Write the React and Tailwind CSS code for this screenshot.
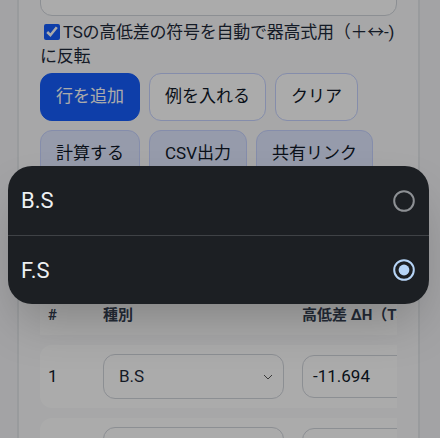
import React from 'react';

const font = { fontFamily: "Roboto, 'Noto Sans CJK JP', sans-serif" };

const Radio = ({ checked }) => (
    <svg width="24" height="24" viewBox="0 0 24 24">
        {checked ? (
            <>
                <circle cx="12" cy="12" r="9.8" fill="none" stroke="#b6d4f6" strokeWidth="2" />
                <circle cx="12" cy="12" r="5.4" fill="#b6d4f6" />
            </>
        ) : (
            <circle cx="12" cy="12" r="9.8" fill="none" stroke="#8d9094" strokeWidth="2" />
        )}
    </svg>
);

const Row = ({ no, kind, dh }) => (
    <div className="grid grid-cols-[55px_199px_220px_160px] items-center h-[63px] bg-white rounded-xl mt-[10px]">
        <div className="px-2 text-[17px] text-gray-900">{no}</div>
        <div className="px-2">
            <div className="w-[181px] h-[45px] rounded-xl border border-gray-300 bg-white flex items-center justify-between pl-[15px] pr-[10px] text-[17px] text-gray-800">
                <span>{kind}</span>
                <svg width="10" height="6" viewBox="0 0 10 6">
                    <path d="M1 1l4 4 4-4" fill="none" stroke="#555" strokeWidth="1" />
                </svg>
            </div>
        </div>
        <div className="px-2">
            <div className="w-[200px] h-[43px] rounded-xl border border-gray-300 bg-white flex items-center pl-[10px] text-[17px] text-gray-900">
                {dh}
            </div>
        </div>
        <div />
    </div>
);

const App = () => {
    const sheetOptions = [
        { label: "B.S", checked: false },
        { label: "F.S", checked: true }
    ];

    return (
        <div className="relative h-[438px] overflow-hidden bg-gray-100" style={font}>
            {/* ページ本体 */}
            <div className="ml-[17px] w-[403px] -mt-[54px] bg-gray-50 border-2 border-gray-200 px-[21px] pt-[18px] pb-10">
                <div className="h-[50px] rounded-xl border border-gray-300 bg-white flex items-center pl-[13px] text-[17px] text-gray-900">
                    100
                </div>

                <label className="block mt-[4px] text-[17px] leading-[24px] tracking-[-0.25px] text-gray-800">
                    <input type="checkbox" defaultChecked className="w-4 h-4 ml-1 mr-[3px] align-[-2px] accent-blue-600" />
                    TSの高低差の符号を自動で器高式用<span className="whitespace-nowrap">（＋↔-)</span>に反転
                </label>

                <div className="flex flex-wrap gap-[9px] mt-[5px]">
                    <button className="h-12 px-[15px] rounded-xl border border-blue-600 bg-blue-600 text-white text-[17px]">行を追加</button>
                    <button className="h-12 px-[15px] rounded-xl border border-indigo-200 bg-white text-gray-900 text-[17px]">例を入れる</button>
                    <button className="h-12 px-[15px] rounded-xl border border-indigo-200 bg-white text-gray-900 text-[17px]">クリア</button>
                    <button className="h-12 px-[15px] rounded-xl border border-indigo-200 bg-indigo-100 text-gray-900 text-[17px]">計算する</button>
                    <button className="h-12 px-[15px] rounded-xl border border-indigo-200 bg-indigo-100 text-gray-900 text-[17px]">CSV出力</button>
                    <button className="h-12 px-[15px] rounded-xl border border-indigo-200 bg-indigo-100 text-gray-900 text-[17px]">共有リンク</button>
                </div>

                {/* 表 */}
                <div className="mt-[113px] w-[357px] overflow-hidden">
                    <div className="w-[634px]">
                        <div className="grid grid-cols-[55px_199px_220px_160px] items-end h-[44px] pb-[9px] bg-white rounded-t-xl text-[15px] font-bold text-gray-700">
                            <div className="px-2">#</div>
                            <div className="px-2">種別</div>
                            <div className="px-2">高低差 ΔH（TS）</div>
                            <div className="px-2">備考</div>
                        </div>
                        <Row no="1" kind="B.S" dh="-11.694" />
                        <Row no="2" kind="F.S" dh="2.315" />
                    </div>
                </div>
            </div>

            {/* 暗幕 */}
            <div className="absolute inset-0 bg-black/[0.33]" />

            {/* 選択シート */}
            <div className="absolute left-[8px] top-[166px] w-[421px] rounded-[24px] bg-[#1c1f23] shadow-2xl overflow-hidden">
                {sheetOptions.map((opt, i) => (
                    <div
                        key={opt.label}
                        className={`flex items-center justify-between h-[69px] pl-[13px] pr-[13px] ${i > 0 ? "border-t border-[#3f4246]" : ""}`}
                    >
                        <span className="text-[22px] text-[#eef0f2]">{opt.label}</span>
                        <Radio checked={opt.checked} />
                    </div>
                ))}
            </div>
        </div>
    );
};

export default App;
